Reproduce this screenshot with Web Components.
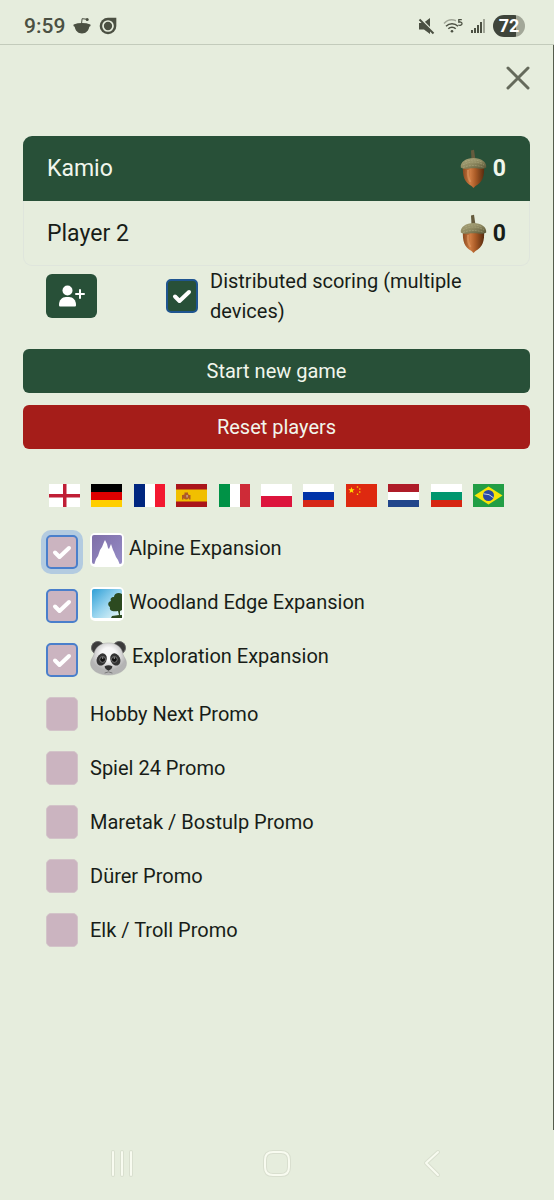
<!DOCTYPE html>
<html lang="en">
<head>
<meta charset="utf-8">
<meta name="viewport" content="width=device-width, initial-scale=1">
<title>Forest scoring</title>
<style>
    html, body {
        margin: 0;
        min-height: 100%;
    }
    body {
        --page: #e6eddd;
        --green: #285038;
        --red: #a51d19;
        --pink: #cbb4c0;
        background: var(--page);
        color: #181d18;
        font-family: Roboto, "Liberation Sans", sans-serif;
        font-size: 20px;
        line-height: 30px;
    }
</style>
</head>
<body>
<score-app></score-app>

<script>
class StatusBar extends HTMLElement {
    constructor() {
        super();
        this.attachShadow({mode:'open'});
        this.shadowRoot.innerHTML = `
        <style>
        :host {
            display: flex;
            justify-content: space-between;
            align-items: center;
            height: 45px;
            padding: 8px 29px 0 24px;
            box-sizing: border-box;
            border-bottom: 1px solid #c3cbbb;
            color: #4b5042;
        }
        div {
            display: flex;
            align-items: center;
            gap: 8px;
        }
        svg { display: block; }
        .time { font-size: 21px; font-weight: 500; }
        .battery {
            width: 32px;
            border-radius: 11px;
            background: linear-gradient(to right, #3f453b 72%, #a2a798 72%);
            color: #fff;
            font-size: 18px;
            font-weight: 700;
            line-height: 22px;
            text-align: center;
        }
        </style>
        <div>
            <span class="time">9:59</span>
            <svg width="18" height="18" viewBox="0 0 18 18" fill="currentColor">
                <path d="M1.500 7.300Q4 6 9 6t7.500 1.300c1.200-.4 1.700 1.700-.2 2.500-.7 4-3.300 6.700-7.300 6.700S2.400 13.800 1.700 9.800C-.2 9 .3 6.900 1.500 7.300z"/>
                <path d="M8.500 7l.6-5.300 4.500.5" fill="none" stroke="currentColor"/>
                <circle cx="14.200" cy="2.500" r="1.500"/>
            </svg>
            <svg width="18" height="18" viewBox="0 0 18 18" fill="currentColor">
                <path d="M9 .7h8.300V9A8.300 8.300 0 1 1 9 .7z"/>
                <circle cx="9" cy="9" r="5" fill="none" stroke="#e6eddd" stroke-width="1.700"/>
            </svg>
        </div>
        <div>
            <svg width="17" height="17" viewBox="0 0 17 17" fill="currentColor">
                <path d="M1 5h4l7 5.500V16l-6-4.500H1zM6 4.500L12 0v9.500z"/>
                <path d="M2.500 .5l14 14" stroke="#e6eddd" stroke-width="1.500"/>
                <path d="M1.500 1.500l14 14" stroke="currentColor" stroke-width="2"/>
            </svg>
            <svg width="20" height="16" viewBox="0 0 20 16" fill="none" stroke="currentColor" stroke-width="1.500">
                <path d="M1 5.500a11 11 0 0 1 12-2.800" stroke="#a2a798"/>
                <path d="M3 8.300a8.500 8.500 0 0 1 12 0M5.300 10.800a5.300 5.300 0 0 1 7.400 0"/>
                <circle cx="9" cy="13.300" r="1.300" fill="currentColor" stroke="none"/>
                <path d="M18.800 1.700h-3v2.500c2-.5 3.200.1 3.200 1.500 0 1.500-2 2-3.700 1.300" stroke-width="1.300"/>
            </svg>
            <svg width="14" height="16" viewBox="0 0 14 16" fill="currentColor">
                <path d="M0 12h2v3H0zM3 10h2v5H3zM6 7h2v8H6zM9 4h2v11H9z"/>
                <path d="M12 1h2v14h-2z" fill="#a2a798"/>
            </svg>
            <span class="battery">72</span>
        </div>
        `;
    }
}
customElements.define('status-bar', StatusBar)

class PlayerRow extends HTMLElement {
    constructor() {
        super();
        this.attachShadow({mode:'open'});
        this.shadowRoot.innerHTML = `
        <style>
        :host {
            display: flex;
            justify-content: space-between;
            align-items: center;
            padding: 0 24px;
            height: 65px;
            font-size: 23px;
        }
        :host([active]) {
            background: var(--green);
            color: #f1f6ec;
        }
        .score {
            display: flex;
            align-items: center;
            gap: 6px;
            font-weight: 700;
        }
        svg { display: block; }
        </style>
        <span><slot></slot></span>
        <span class="score">
            <svg width="27" height="40" viewBox="0 0 27 40">
                <defs>
                    <linearGradient id="nut">
                        <stop offset="0" stop-color="#8b4a20"/>
                        <stop offset=".35" stop-color="#cf7c42"/>
                        <stop offset=".6" stop-color="#a95a26"/>
                        <stop offset="1" stop-color="#582b0e"/>
                    </linearGradient>
                    <linearGradient id="cap" x2="1" y2="1">
                        <stop offset="0" stop-color="#aaa67c"/>
                        <stop offset=".5" stop-color="#8f8a61"/>
                        <stop offset="1" stop-color="#555133"/>
                    </linearGradient>
                </defs>
                <path d="M11.500 11L11 1.500l3-.8 1.500 10.300z" fill="#655b3d"/>
                <path d="M3 17c-.8 10 1.500 16.500 8.500 20l2 2 2-2C22.500 33.500 24.800 27 24 17z" fill="url(#nut)"/>
                <path d="M8 21c-.5 5 .5 9 2.500 12" fill="none" stroke="#e6a16b" stroke-width="2" opacity=".5"/>
                <path d="M.8 18.500C0 13 6 9 13.500 9S27 13 26.200 18.500c-3 2.200-7.500 .7-12.700 .7S3.500 20.700.8 18.500z" fill="url(#cap)"/>
                <path d="M3 16q10-6 21 0M5 13q8-4 17 0M3 18.500q10-4 21 0" fill="none" stroke="#c3bd95" stroke-dasharray="2 1" opacity=".4"/>
            </svg>
            <slot name="score"></slot>
        </span>
        `;
    }
}
customElements.define('player-row', PlayerRow)

class CheckOption extends HTMLElement {
    constructor() {
        super();
        this.attachShadow({mode:'open'});
        this.shadowRoot.innerHTML = `
        <style>
        :host {
            display: flex;
            align-items: center;
            gap: 12px;
        }
        .box {
            display: grid;
            flex: none;
        }
        input, svg { grid-area: 1 / 1; }
        input {
            appearance: none;
            box-sizing: border-box;
            width: 32px;
            height: 34px;
            margin: 0;
            border: 1px solid #d3c4c9;
            border-radius: 5px;
            background: var(--pink);
        }
        input:checked { border: 2px solid #4a7fcb; }
        :host([dark]) input {
            background: var(--green);
            border-color: #1f5590;
        }
        :host([glow]) input { box-shadow: 0 0 0 5px #b3cbe0; }
        /* picture in the label sits a little above the box */
        :host([pictured]) label { padding-bottom: 4px; }
        svg {
            place-self: center;
            pointer-events: none;
            visibility: hidden;
        }
        input:checked + svg { visibility: visible; }
        </style>
        <span class="box">
            <input type="checkbox" id="check">
            <svg width="20" height="18" viewBox="0 0 20 18" fill="none" stroke="#fff" stroke-width="4" stroke-linecap="round" stroke-linejoin="round">
                <path d="M3 9.500l4.500 4.500L17 5"/>
            </svg>
        </span>
        <label for="check"><slot></slot></label>
        `;
        this.shadowRoot.querySelector('input').checked = this.hasAttribute('checked');
    }
}
customElements.define('check-option', CheckOption)

class WideButton extends HTMLElement {
    constructor() {
        super();
        this.attachShadow({mode:'open'});
        this.shadowRoot.innerHTML = `
        <style>
        :host { display: block; }
        button {
            display: block;
            width: 100%;
            padding: 7px 12px;
            border: 0;
            border-radius: 6px;
            background: var(--green);
            color: #f1f6ec;
            font: inherit;
        }
        :host([danger]) button { background: var(--red); }
        </style>
        <button type="button"><slot></slot></button>
        `;
    }
}
customElements.define('wide-button', WideButton)

// three equal bands, top to bottom
const bands = (a, b, c) => `
    <path fill="${a}" d="M0 0h31v8H0z"/><path fill="${b}" d="M0 8h31v8H0z"/><path fill="${c}" d="M0 16h31v7H0z"/>`;
// three equal bands, left to right
const columns = (a, b, c) => `
    <path fill="${a}" d="M0 0h11v23H0z"/><path fill="${b}" d="M11 0h10v23H11z"/><path fill="${c}" d="M21 0h10v23H21z"/>`;

const flags = {
    English: `<path fill="#fff" d="M0 0h31v23H0z"/><path fill="#c01e36" d="M14 0h3.500v23H14zM0 10h31v3.500H0z"/>`,
    Deutsch: bands('#000', '#d00', '#ffce00'),
    Français: columns('#00267f', '#fff', '#f31830'),
    Español: `<path fill="#aa151b" d="M0 0h31v23H0z"/><path fill="#f1bf00" d="M0 5.500h31v12H0z"/>
        <path fill="#ad5a25" d="M6 11h1.500v4.500H6zM13 11h1.500v4.500H13zM7.500 10.500h5.500v3.500q-2.700 3-5.500 0zM8.500 8.500h3.500v2H8.500z"/>
        <path fill="#c9a08c" d="M10.300 11h1.500v2.500h-1.500z"/>`,
    Italiano: columns('#009246', '#fff', '#ce2b37'),
    Polski: `<path fill="#fff" d="M0 0h31v12H0z"/><path fill="#dc143c" d="M0 12h31v11H0z"/>`,
    Русский: bands('#fff', '#0033a8', '#d62718'),
    中文: `<path fill="#de2910" d="M0 0h31v23H0z"/>
        <path fill="#ffde00" d="M5.500 3l.8 2.300h2.400L6.800 6.800l.7 2.300-2-1.400-2 1.400.7-2.300-1.900-1.500h2.400z"/>
        <g fill="#ffde00"><circle cx="11.500" cy="3" r=".8"/><circle cx="13.800" cy="5" r=".8"/><circle cx="13.800" cy="8" r=".8"/><circle cx="11.500" cy="10.300" r=".8"/></g>`,
    Nederlands: bands('#ae1c28', '#fff', '#21468b'),
    Български: bands('#fff', '#00966e', '#d62612'),
    Português: `<path fill="#229e45" d="M0 0h31v23H0z"/><path fill="#f8e509" d="M15.500 2.500l14 9-14 9-14-9z"/>
        <circle cx="15.500" cy="11.500" r="5.500" fill="#2b49a3"/><path d="M10.500 9.800q6-.3 10 4" fill="none" stroke="#c8d3e4"/>`
};

class FlagPicker extends HTMLElement {
    constructor() {
        super();
        this.attachShadow({mode:'open'});
        this.shadowRoot.innerHTML = `
        <style>
        :host {
            display: flex;
            justify-content: space-between;
        }
        button {
            padding: 0;
            border: 0;
            background: none;
        }
        svg { display: block; }
        </style>
        ${Object.entries(flags).map(([name, shapes]) => `
        <button type="button" aria-label="${name}">
            <svg width="31" height="23" viewBox="0 0 31 23">${shapes}</svg>
        </button>`).join('')}
        `;
    }
}
customElements.define('flag-picker', FlagPicker)

class ExpansionIcon extends HTMLElement {
    constructor() {
        super();
        const icons = {
            alpine: `<svg width="34" height="34" viewBox="0 0 34 34">
                <defs><linearGradient id="sky" x2="1" y2="1"><stop stop-color="#7f6fa8"/><stop offset="1" stop-color="#958cc6"/></linearGradient></defs>
                <rect width="34" height="34" rx="5" fill="#fff"/>
                <rect x="2" y="2" width="30" height="29" rx="2" fill="url(#sky)"/>
                <path fill="#fff" d="M4 32l2-6 2-3 2-6 2-3 2-5 1-2 2 4 1 4 1 1 2-5 2 6 1 2 2 5 2 3 2 5z"/></svg>`,
            woodland: `<svg width="34" height="34" viewBox="0 0 34 34">
                <defs><linearGradient id="sky" x2="1" y2="1"><stop stop-color="#2f9fd6"/><stop offset=".5" stop-color="#96d3ee"/><stop offset="1" stop-color="#eefaf8"/></linearGradient></defs>
                <rect width="34" height="34" rx="5" fill="#fff"/>
                <rect x="2" y="2" width="30" height="29" rx="2" fill="url(#sky)"/>
                <path fill="#2c4a20" d="M32 7c-3-2-8-1-8 3-3 0-4 2-3 4-4 1-3 5-1 6-1 4 3 5 8 4l1 4-7 1-1 2h11z"/>
                <path fill="#e4f4ef" d="M30 24l2-1v5l-2 0z"/></svg>`,
            panda: `<svg width="37" height="36" viewBox="0 0 38 37">
                <defs><radialGradient id="fur" cy=".35"><stop offset=".4" stop-color="#f7f7f7"/><stop offset="1" stop-color="#b4b4b4"/></radialGradient></defs>
                <g fill="#3b3b3b" stroke="#666"><circle cx="8" cy="8" r="6.500"/><circle cx="30" cy="8" r="6.500"/></g>
                <path fill="url(#fur)" stroke="#aaa" stroke-width=".5" d="M19 3c9 0 14 5 15 12 1 3 3.500 5 3.500 9 0 7-8 12-18.500 12S.5 31 .5 24c0-4 2.500-6 3.500-9C5 8 10 3 19 3z"/>
                <g fill="#333"><ellipse cx="12" cy="20" rx="5" ry="6.500" transform="rotate(25 12 20)"/><ellipse cx="26" cy="20" rx="5" ry="6.500" transform="rotate(-25 26 20)"/>
                <path d="M15 27q4-2 8 0 0 3-4 4.500-4-1.500-4-4.500z"/></g>
                <g fill="#111" stroke="#777"><circle cx="13" cy="20" r="3"/><circle cx="25" cy="20" r="3"/></g>
                <g fill="#bbb"><circle cx="13" cy="18.500" r=".8"/><circle cx="25" cy="18.500" r=".8"/></g>
                <path d="M15 34q4-2.500 8 0" fill="none" stroke="#777"/></svg>`
        };
        this.attachShadow({mode:'open'});
        this.shadowRoot.innerHTML = `
        <style>
        :host {
            display: inline-block;
            vertical-align: middle;
        }
        svg { display: block; }
        </style>
        ${icons[this.getAttribute('name')]}
        `;
    }
}
customElements.define('expansion-icon', ExpansionIcon)

class PhoneNav extends HTMLElement {
    constructor() {
        super();
        this.attachShadow({mode:'open'});
        this.shadowRoot.innerHTML = `
        <style>
        :host {
            display: flex;
            justify-content: space-between;
            align-items: center;
            height: 70px;
            padding: 0 108px 4px;
            box-sizing: border-box;
        }
        button {
            padding: 0;
            border: 0;
            background: none;
        }
        svg {
            display: block;
            fill: none;
            stroke-linecap: round;
            stroke-linejoin: round;
        }
        .edge { stroke: #d9dfcf; stroke-width: 4; }
        .line { stroke: #f8fbf0; stroke-width: 2; }
        </style>
        ${[
            ['Recent apps', 'M5 3v23M14 3v23M23 3v23'],
            ['Home', 'M10 3h8q8 0 8 8v7q0 8-8 8h-8q-8 0-8-8v-7q0-8 8-8z'],
            ['Back', 'M20 3L8 14l12 12']
        ].map(([name, d]) => `
        <button type="button" aria-label="${name}">
            <svg width="28" height="29" viewBox="0 0 28 29"><path class="edge" d="${d}"/><path class="line" d="${d}"/></svg>
        </button>`).join('')}
        `;
    }
}
customElements.define('phone-nav', PhoneNav)

class ScoreApp extends HTMLElement {
    constructor() {
        super();
        this.attachShadow({mode:'open'});
        this.shadowRoot.innerHTML = `
        <style>
        :host {
            display: flex;
            flex-direction: column;
            min-height: 100vh;
        }
        main {
            flex: 1;
            padding: 0 23px;
            border-right: 1px solid #555c4c;
        }
        header {
            display: flex;
            justify-content: flex-end;
            padding: 21px 0 46px;
        }
        svg { display: block; }
        button {
            padding: 0;
            border: 0;
            background: none;
        }
        .players {
            border-radius: 9px;
            box-shadow: inset 0 0 0 1px #dfe5dc;
            overflow: hidden;
        }
        .setup {
            display: flex;
            align-items: flex-start;
            gap: 69px;
            padding: 0 23px;
        }
        .add {
            margin-top: 8px;
            padding: 9px 12px;
            border-radius: 6px;
            background: var(--green);
        }
        .actions {
            display: grid;
            gap: 12px;
            margin-top: 23px;
        }
        flag-picker { padding: 35px 26px 0; }
        .expansions {
            display: grid;
            grid-auto-rows: 54px;
            margin-top: 18px;
            padding: 0 23px;
        }
        </style>
        <status-bar></status-bar>
        <main>
            <header>
                <button type="button" aria-label="Close">
                    <svg width="24" height="24" viewBox="0 0 24 24" stroke="#656a5b" stroke-width="3" stroke-linecap="round"><path d="M2 2l20 20M22 2L2 22"/></svg>
                </button>
            </header>
            <section class="players">
                <player-row active>Kamio<span slot="score">0</span></player-row>
                <player-row>Player 2<span slot="score">0</span></player-row>
            </section>
            <div class="setup">
                <button type="button" class="add" aria-label="Add player">
                    <svg width="27" height="26" viewBox="0 0 27 26" fill="#fff">
                        <circle cx="9.500" cy="7.500" r="5"/>
                        <path d="M1 22c0-5 3-8 7-8h3c4 0 7 3 7 8 0 1-.5 1.500-1.500 1.500h-14C1.500 23.500 1 23 1 22z"/>
                        <path d="M22 7v8M18 11h8" stroke="#fff" stroke-width="2" stroke-linecap="round"/>
                    </svg>
                </button>
                <check-option checked dark>Distributed scoring (multiple devices)</check-option>
            </div>
            <div class="actions">
                <wide-button>Start new game</wide-button>
                <wide-button danger>Reset players</wide-button>
            </div>
            <flag-picker></flag-picker>
            <section class="expansions">
                <check-option checked glow pictured><expansion-icon name="alpine"></expansion-icon> Alpine Expansion</check-option>
                <check-option checked pictured><expansion-icon name="woodland"></expansion-icon> Woodland Edge Expansion</check-option>
                <check-option checked pictured><expansion-icon name="panda"></expansion-icon> Exploration Expansion</check-option>
                <check-option>Hobby Next Promo</check-option>
                <check-option>Spiel 24 Promo</check-option>
                <check-option>Maretak / Bostulp Promo</check-option>
                <check-option>Dürer Promo</check-option>
                <check-option>Elk / Troll Promo</check-option>
            </section>
        </main>
        <phone-nav></phone-nav>
        `;
    }
}
customElements.define('score-app', ScoreApp)
</script>
</body>
</html>
